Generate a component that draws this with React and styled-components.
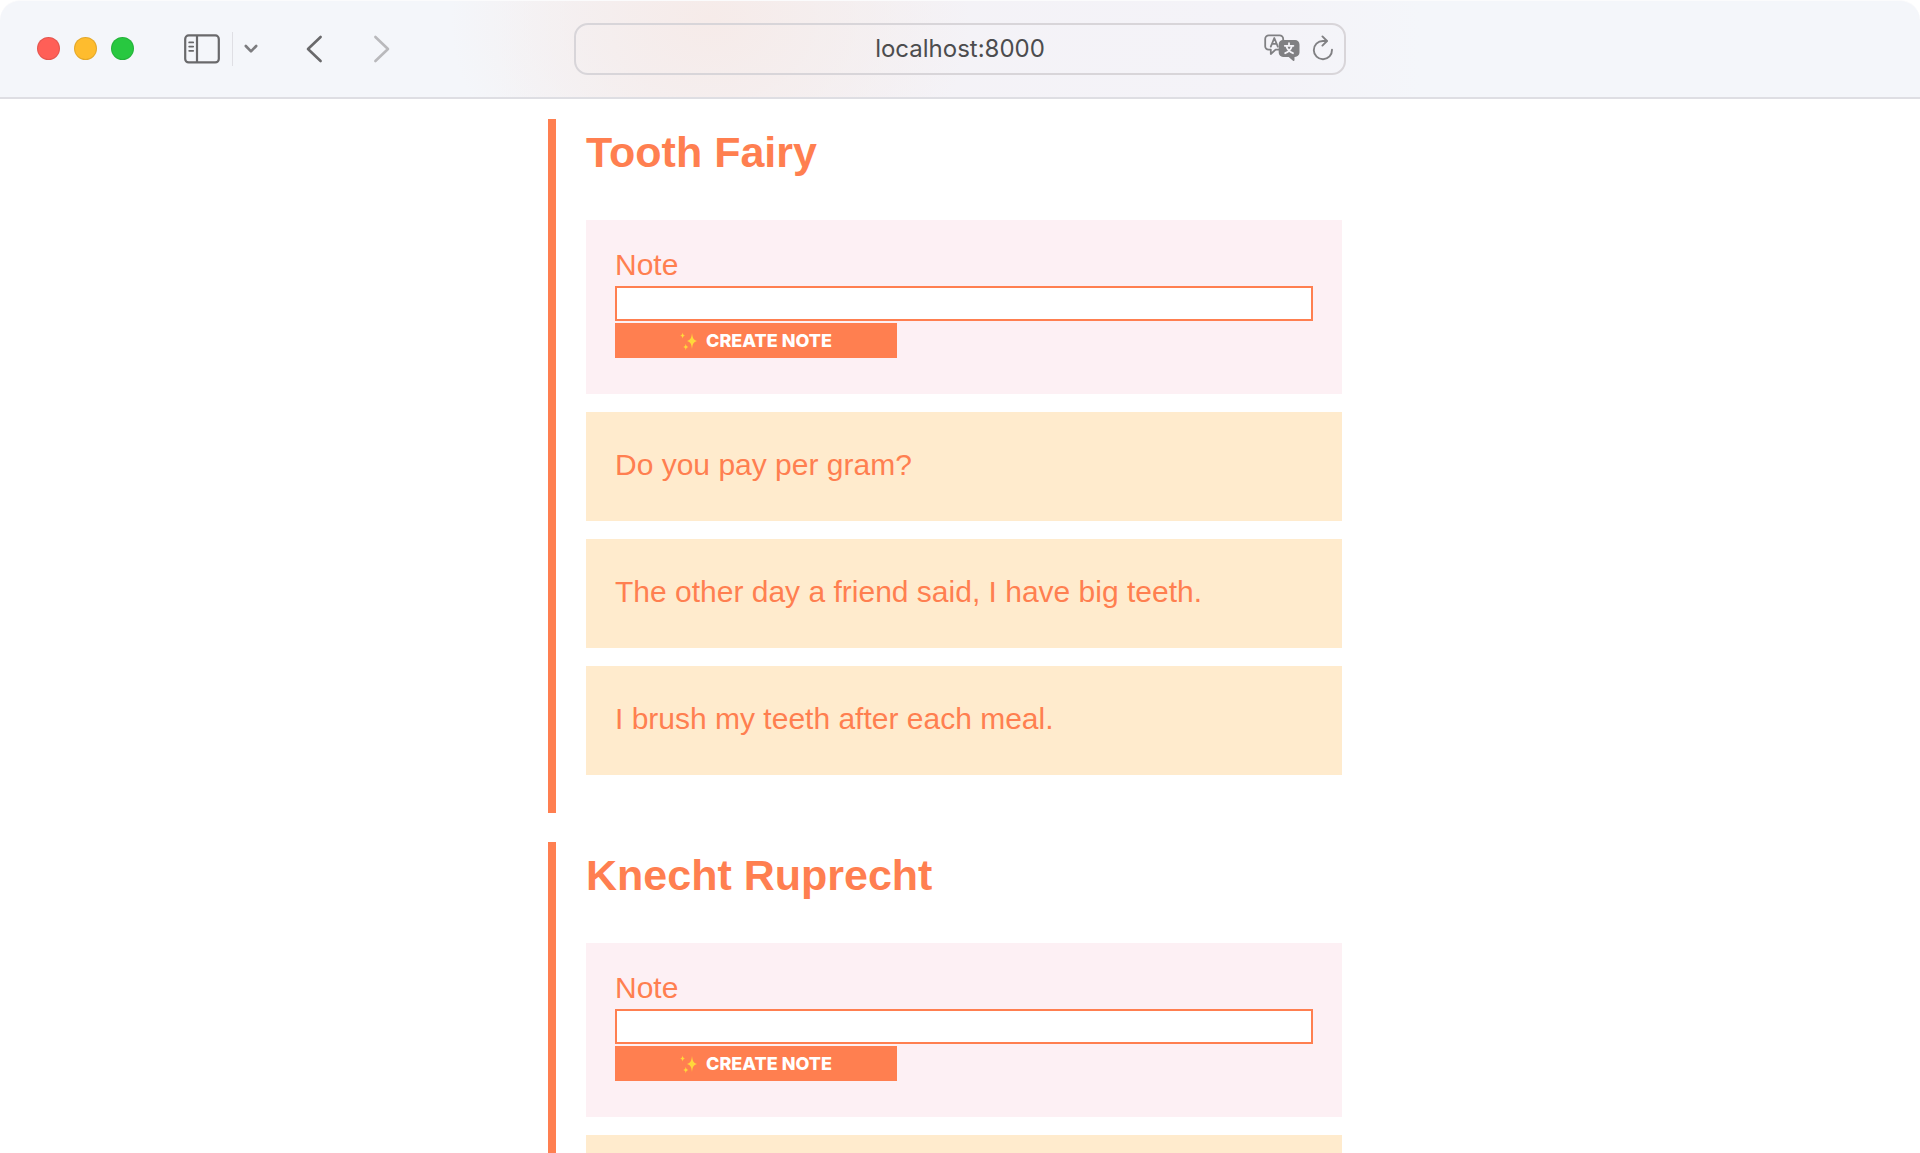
import React, { useId } from "react";
import styled, { createGlobalStyle } from "styled-components";

const coral = "#ff7f50";

const GlobalStyle = createGlobalStyle`
  * { box-sizing: border-box; }
  html, body, #root { height: 100%; }
  body {
    margin: 0;
    background: #fff;
    color: ${coral};
    font-family: "Liberation Sans", Helvetica, Arial, sans-serif;
    overflow: hidden;
  }
`;

const BrowserWindow = styled.div`
  display: flex;
  flex-direction: column;
  height: 100%;
  overflow: hidden;
`;

const Toolbar = styled.header`
  flex: none;
  display: grid;
  grid-template-columns: 1fr minmax(0, 772px) 1fr;
  align-items: center;
  height: 99px;
  padding-bottom: 1px;
  border-bottom: 2px solid #dedee3;
  border-top: 1px solid #fbfbfc;
  border-radius: 20px 20px 0 0;
  background:
    radial-gradient(ellipse 260px 200px at 37% 20%, #f6ebe9 0%, #f5edecb3 50%, #f4f2f600 100%),
    linear-gradient(90deg, #f4f6fa 26%, #f4f2f6 34%, #f4f3f8 66%, #f4f6fa 74%);
`;

const Controls = styled.div`
  display: flex;
  align-items: center;
  padding-left: 37px;
`;

const Lights = styled.div`
  display: flex;
  gap: 14px;
  margin-right: 50px;
`;

const Light = styled.button`
  width: 23px;
  height: 23px;
  padding: 0;
  border: 1px solid #0000001a;
  border-radius: 50%;
  background: ${(p) => p.$color};
`;

const IconButton = styled.button`
  display: flex;
  padding: 0;
  border: 0;
  background: none;
  color: ${(p) => (p.$faded ? "#b9b9bc" : "#69696b")};
`;

const Divider = styled.span`
  width: 1px;
  height: 34px;
  margin: 0 11px 0 12px;
  background: #dfdfe4;
`;

const History = styled.nav`
  display: flex;
  gap: 50px;
  margin-left: 48px;
`;

const AddressBar = styled.div`
  display: grid;
  grid-template-columns: 80px minmax(0, 1fr) 80px;
  align-items: center;
  height: 52px;
  border: 2px solid #d8d5d9;
  border-radius: 14px;
`;

const Address = styled.input`
  grid-column: 2;
  width: 100%;
  border: 0;
  padding: 1px 0 0;
  background: none;
  color: #4c4c4e;
  font: 24px/32px Inter, sans-serif;
  text-align: center;
  outline: none;
`;

const AddressActions = styled.div`
  display: flex;
  align-items: center;
  gap: 12px;
  padding-bottom: 2px;
`;

const Page = styled.main`
  flex: 1;
  min-height: 0;
  overflow: hidden;
  padding-top: 20px;
`;

const Column = styled.div`
  display: flex;
  flex-direction: column;
  gap: 29px;
  max-width: 824px;
  margin: 0 auto;
  padding-right: 30px;
`;

const Person = styled.section`
  display: flex;
  flex-direction: column;
  gap: 18px;
  padding: 8px 0 38px 30px;
  border-left: 8px solid ${coral};
`;

const Name = styled.h2`
  margin: 0 0 25px;
  font-size: 43px;
  line-height: 50px;
`;

const NoteForm = styled.form`
  display: flex;
  flex-direction: column;
  align-items: flex-start;
  gap: 2px;
  padding: 26px 29px 36px;
  background: #fdf0f4;
`;

const Label = styled.label`
  font-size: 30px;
  line-height: 38px;
`;

const NoteInput = styled.input`
  width: 100%;
  height: 35px;
  padding: 0 8px;
  border: 2px solid ${coral};
  border-radius: 0;
  background: #fff;
  color: ${coral};
  font: inherit;
  font-size: 18px;
`;

const CreateButton = styled.button`
  display: flex;
  align-items: center;
  justify-content: center;
  gap: 8px;
  width: 282px;
  height: 35px;
  padding: 0;
  border: 0;
  background: ${coral};
  color: #fff;
  font: 800 18px/24px Inter, sans-serif;
  text-transform: uppercase;
`;

const Note = styled.p`
  margin: 0;
  padding: 35px 29px 38px;
  background: #ffebcd;
  font-size: 30px;
  line-height: 36px;
`;

const SidebarIcon = () => (
  <svg width="36" height="30" viewBox="0 0 36 30" fill="none" stroke="currentColor" strokeWidth="2.2">
    <rect x="1.2" y="1.4" width="33.6" height="27" rx="3.5" />
    <path d="M13 1.4v27" />
    <path d="M5.2 8.4h4M5.2 12.6h4M5.2 16.8h4" strokeWidth="1.8" strokeLinecap="round" />
  </svg>
);

const ChevronIcon = () => (
  <svg width="14" height="10" viewBox="0 0 14 10" fill="none" stroke="#7c7c7f" strokeWidth="2.6" strokeLinecap="round" strokeLinejoin="round">
    <path d="M1.8 2 7 7.4 12.2 2" />
  </svg>
);

const ArrowIcon = ({ d }) => (
  <svg width="17" height="28" viewBox="0 0 17 28" fill="none" stroke="currentColor" strokeWidth="2.6" strokeLinecap="round" strokeLinejoin="round">
    <path d={d} />
  </svg>
);

const TranslateIcon = () => (
  <svg width="36" height="28" viewBox="0 0 36 28" fill="none" stroke="#808083" strokeWidth="1.8" strokeLinecap="round" strokeLinejoin="round">
    <path d="M15 15.6h-3.400L6.800 20v-4.400H4.600A3.400 3.400 0 0 1 1.200 12V5a3.600 3.600 0 0 1 3.600-3.600h10.800A3.600 3.600 0 0 1 19.200 5v1.800" />
    <path d="M6.800 12.600 10.300 4l3.500 8.600M8 9.800h4.600" />
    <path d="M19 6.800h12a3.600 3.600 0 0 1 3.600 3.600v8a3.600 3.600 0 0 1-3.600 3.600h-1.400v4L25 22h-6a3.400 3.400 0 0 1-3.400-3.600v-8A3.400 3.400 0 0 1 19 6.800z" fill="#808083" />
    <path d="M25 9.200v2.200M20.800 11.800h8.600M27.800 12.200c-1 3.400-3.400 5.800-6.600 7M22.400 12.200c1 3.400 3.400 5.800 6.600 7" stroke="#f4f3f8" />
  </svg>
);

const ReloadIcon = () => (
  <svg width="22" height="26" viewBox="0 0 22 26" fill="none" stroke="#808083" strokeWidth="1.9" strokeLinecap="round" strokeLinejoin="round">
    <path d="M20 14.800A9.100 9.100 0 1 1 10.900 6h3.800" />
    <path d="M10.400 1.400 15 6l-4.600 4.600" />
  </svg>
);

const SparklesIcon = () => (
  <svg width="18" height="20" viewBox="0 0 18 20" fill="#ffd83b" aria-hidden="true">
    <path d="M12 2c.6 5 1.4 6.900 5 8-3.600 1.100-4.400 3-5 8-.6-5-1.400-6.900-5-8 3.600-1.100 4.400-3 5-8z" />
    <path d="M2.600 1.400c.3 1.900.8 2.600 2.400 3.100-1.600.5-2.100 1.200-2.400 3.100-.3-1.900-.8-2.600-2.400-3.100 1.600-.5 2.100-1.200 2.400-3.100z" />
    <path d="M5.800 12.800c.3 2 .9 2.700 2.500 3.200-1.600.5-2.200 1.200-2.500 3.200-.3-2-.9-2.700-2.500-3.200 1.600-.5 2.200-1.200 2.500-3.200z" />
  </svg>
);

const people = [
  {
    name: "Tooth Fairy",
    notes: [
      "Do you pay per gram?",
      "The other day a friend said, I have big teeth.",
      "I brush my teeth after each meal.",
    ],
  },
  { name: "Knecht Ruprecht", notes: ["\u00a0"] },
];

function PersonNotes({ name, notes }) {
  const id = useId();
  return (
    <Person>
      <Name>{name}</Name>
      <NoteForm onSubmit={(e) => e.preventDefault()}>
        <Label htmlFor={id}>Note</Label>
        <NoteInput id={id} type="text" />
        <CreateButton type="submit">
          <SparklesIcon />
          Create note
        </CreateButton>
      </NoteForm>
      {notes.map((note) => (
        <Note key={note}>{note}</Note>
      ))}
    </Person>
  );
}

export default function App() {
  return (
    <BrowserWindow>
      <GlobalStyle />
      <Toolbar>
        <Controls>
          <Lights>
            <Light $color="#ff5f57" aria-label="Close" />
            <Light $color="#febc2e" aria-label="Minimize" />
            <Light $color="#28c840" aria-label="Zoom" />
          </Lights>
          <IconButton aria-label="Sidebar"><SidebarIcon /></IconButton>
          <Divider />
          <IconButton aria-label="Tab groups"><ChevronIcon /></IconButton>
          <History>
            <IconButton aria-label="Back"><ArrowIcon d="M14.600 2 2 14l12.600 12" /></IconButton>
            <IconButton $faded aria-label="Forward"><ArrowIcon d="M2.400 2 15 14 2.400 26" /></IconButton>
          </History>
        </Controls>
        <AddressBar>
          <Address type="text" aria-label="Address" defaultValue="localhost:8000" />
          <AddressActions>
            <IconButton aria-label="Translate"><TranslateIcon /></IconButton>
            <IconButton aria-label="Reload"><ReloadIcon /></IconButton>
          </AddressActions>
        </AddressBar>
      </Toolbar>
      <Page>
        <Column>
          {people.map((person) => (
            <PersonNotes key={person.name} {...person} />
          ))}
        </Column>
      </Page>
    </BrowserWindow>
  );
}
